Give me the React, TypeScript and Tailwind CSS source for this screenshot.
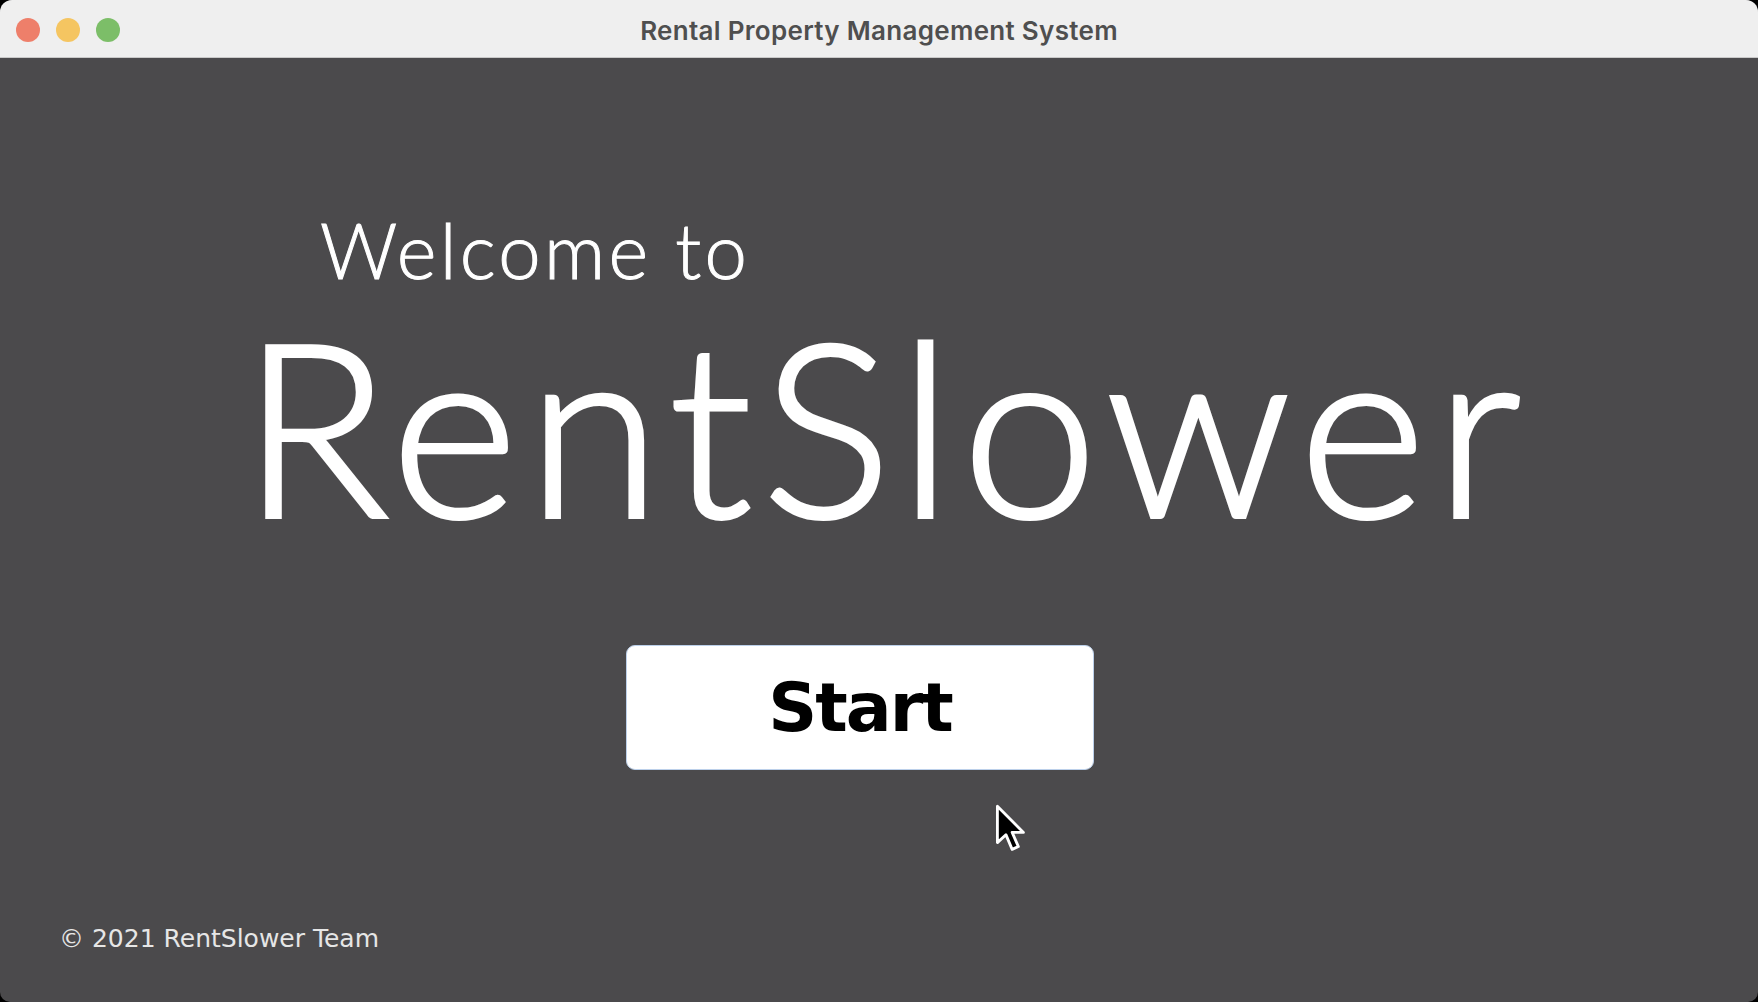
import React from "react";

const TrafficLight = ({ color }: { color: string }) => (
  <span className={`block w-[24px] h-[24px] rounded-full ${color}`}></span>
);

const Cursor = () => (
  <svg width="34" height="50" viewBox="0 0 30 44" className="absolute left-[994px] top-[804px]">
    <path d="M3 2 L3 34 L10.5 27 L16 40 L21.5 37.5 L16 25 L26 25 Z" fill="#000" stroke="#fff" strokeWidth="2.5" strokeLinejoin="round" />
  </svg>
);

const App = () => {
  return (
    <div className="w-[1758px] h-[1002px] bg-black overflow-hidden">
      <div className="relative flex flex-col w-full h-full bg-[#4b4a4c] rounded-t-[12px] rounded-b-[10px] overflow-hidden">
        {/* title bar */}
        <div className="relative flex items-center h-[58px] bg-[#efefef] border-b border-[#c9c9c9] shrink-0">
          <div className="flex items-center gap-[16px] pl-[16px] pt-[2px]">
            <TrafficLight color="bg-[#ee7f6a]" />
            <TrafficLight color="bg-[#f5c561]" />
            <TrafficLight color="bg-[#7cbe68]" />
          </div>
          <div className="absolute inset-0 flex items-center justify-center pt-[3px]">
            <span className="font-['Inter','Noto_Sans',sans-serif] font-semibold text-[26px] text-[#4f4f4f] tracking-[0.3px]">
              Rental Property Management System
            </span>
          </div>
        </div>

        {/* main */}
        <div className="flex flex-col flex-1 font-['Lato','Noto_Sans',sans-serif] text-white">
          <div className="mt-[154px] pl-[320px] text-[76px] leading-none font-light tracking-[3.3px] [-webkit-text-stroke:1px_white]">
            Welcome to
          </div>
          <div className="mt-[15px] pl-[242px] text-[242px] leading-none font-light tracking-[10px] [-webkit-text-stroke:4px_white]">
            RentSlower
          </div>
          <div className="mt-[100px] ml-[626px]">
            <button className="flex items-center justify-center w-[468px] h-[125px] bg-white rounded-[9px] border border-[#bcd0ea] font-['DejaVu_Sans',sans-serif] font-bold text-[68px] text-black tracking-[-2px]">
              Start
            </button>
          </div>
          <div className="mt-auto mb-[45px] pl-[59px] font-['DejaVu_Sans',sans-serif] text-[25px] text-[#e6e6e6]">
            © 2021 RentSlower Team
          </div>
        </div>
        <Cursor />
      </div>
    </div>
  );
};

export default App;
